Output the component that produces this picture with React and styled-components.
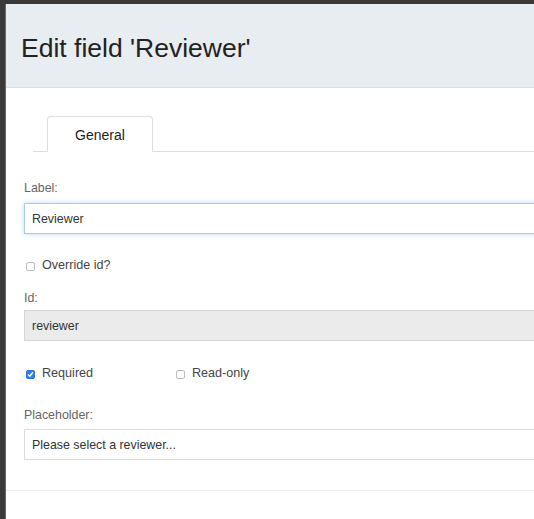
import React from "react";
import styled, { createGlobalStyle } from "styled-components";

const Global = createGlobalStyle`
  html, body { margin: 0; padding: 0; }
  body {
    background: #3a3a3a;
    font-family: "Liberation Sans", Arial, sans-serif;
    overflow: hidden;
    width: 534px;
    height: 519px;
  }
`;

const Modal = styled.div`
  margin: 4px 0 0 5px;
  width: 720px;
  height: 515px;
  background: #fff;
  border-left: 1px solid #6a6a6a;
  box-sizing: border-box;
`;

const Header = styled.div`
  height: 84px;
  background: #e8edf1;
  border-bottom: 1px solid #d9dee3;
  display: flex;
  align-items: center;
  padding-left: 15px;
  box-sizing: border-box;
`;

const Title = styled.h1`
  margin: 0;
  font-size: 26.5px;
  font-weight: normal;
  color: #222;
  padding-top: 5px;
`;

const Body = styled.div`
  padding: 28px 0 0 0;
  border-bottom: 1px solid #ececec;
  height: 403px;
  box-sizing: border-box;
`;

const TabBar = styled.div`
  margin-left: 27px;
  border-bottom: 1px solid #dddddd;
  display: flex;
  padding-left: 14px;
`;

const Tab = styled.div`
  width: 106px;
  height: 36px;
  box-sizing: border-box;
  border: 1px solid #dddddd;
  border-bottom: none;
  border-radius: 4px 4px 0 0;
  margin-bottom: -1px;
  background: #fff;
  display: flex;
  align-items: center;
  justify-content: center;
  font-size: 14px;
  color: #222;
`;

const Form = styled.div`
  padding: 28px 0 0 18px;
  display: flex;
  flex-direction: column;
`;

const Label = styled.div`
  font-size: 12.4px;
  color: #666;
  line-height: 16px;
  margin-bottom: ${(p) => p.mb || 7}px;
`;

const Input = styled.div`
  height: 31px;
  box-sizing: border-box;
  border: 1px solid ${(p) => (p.focus ? "#a9cbea" : p.disabled ? "#d6d6d6" : "#dcdcdc")};
  box-shadow: ${(p) => (p.focus ? "0 0 5px rgba(120,170,230,0.45)" : "none")};
  background: ${(p) => (p.disabled ? "#ebebeb" : "#fff")};
  display: flex;
  align-items: center;
  padding-left: 7px;
  font-size: 12.4px;
  color: #333;
  margin-bottom: ${(p) => p.mb || 0}px;
`;

const CheckRow = styled.div`
  display: flex;
  align-items: center;
  margin-bottom: ${(p) => p.mb || 0}px;
`;

const Check = styled.label`
  display: flex;
  align-items: center;
  width: ${(p) => p.w || "auto"};
  font-size: 12.6px;
  color: #444;
`;

const Box = styled.span`
  width: 9px;
  height: 9px;
  margin-left: 2px;
  margin-right: 7px;
  border-radius: 2px;
  box-sizing: border-box;
  border: 1px solid ${(p) => (p.checked ? "#2a74e0" : "#bdbdbd")};
  background: ${(p) => (p.checked ? "#2f7ef0" : "#fff")};
  display: flex;
  align-items: center;
  justify-content: center;
  margin-top: 3px;
`;

function Checkbox({ checked, label, w }) {
  return (
    <Check w={w}>
      <Box checked={checked}>
        {checked && (
          <svg width="7" height="7" viewBox="0 0 7 7">
            <path d="M1 3.6 L2.8 5.3 L6 1.2" fill="none" stroke="#fff" strokeWidth="1.4" />
          </svg>
        )}
      </Box>
      {label}
    </Check>
  );
}

export default function App() {
  return (
    <>
      <Global />
      <Modal>
        <Header>
          <Title>Edit field 'Reviewer'</Title>
        </Header>
        <Body>
          <TabBar>
            <Tab>General</Tab>
          </TabBar>
          <Form>
            <Label>Label:</Label>
            <Input focus mb={24}>Reviewer</Input>
            <CheckRow mb={18}>
              <Checkbox label="Override id?" />
            </CheckRow>
            <Label mb={4}>Id:</Label>
            <Input disabled mb={25}>reviewer</Input>
            <CheckRow mb={27}>
              <Checkbox checked label="Required" w="150px" />
              <Checkbox label="Read-only" />
            </CheckRow>
            <Label mb={6}>Placeholder:</Label>
            <Input>Please select a reviewer...</Input>
          </Form>
        </Body>
      </Modal>
    </>
  );
}
